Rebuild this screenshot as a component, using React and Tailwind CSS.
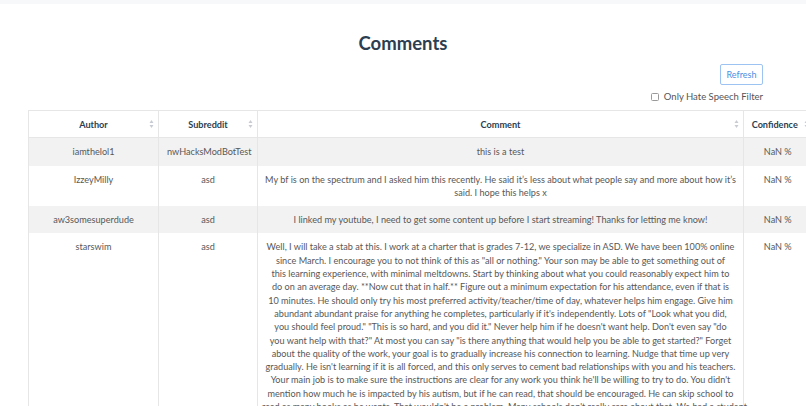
import { useState } from 'react';

// long comment kept as its visible lines so the wrap matches the original table
const starswimLines = [
  'Well, I will take a stab at this. I work at a charter that is grades 7-12, we specialize in ASD. We have been 100% online',
  'since March. I encourage you to not think of this as "all or nothing." Your son may be able to get something out of',
  'this learning experience, with minimal meltdowns. Start by thinking about what you could reasonably expect him to',
  'do on an average day. **Now cut that in half.** Figure out a minimum expectation for his attendance, even if that is',
  '10 minutes. He should only try his most preferred activity/teacher/time of day, whatever helps him engage. Give him',
  'abundant abundant praise for anything he completes, particularly if it\'s independently. Lots of "Look what you did,',
  'you should feel proud." "This is so hard, and you did it." Never help him if he doesn\'t want help. Don\'t even say "do',
  'you want help with that?" At most you can say "is there anything that would help you be able to get started?" Forget',
  'about the quality of the work, your goal is to gradually increase his connection to learning. Nudge that time up very',
  'gradually. He isn\'t learning if it is all forced, and this only serves to cement bad relationships with you and his teachers.',
  'Your main job is to make sure the instructions are clear for any work you think he\'ll be willing to try to do. You didn\'t',
  'mention how much he is impacted by his autism, but if he can read, that should be encouraged. He can skip school to',
  'read as many books as he wants. That wouldn\'t be a problem. Many schools don\'t really care about that. We had a student',
];

const comments = [
  { author: 'iamthelol1', subreddit: 'nwHacksModBotTest', body: 'this is a test', confidence: 'NaN %' },
  {
    author: 'IzzeyMilly',
    subreddit: 'asd',
    body: "My bf is on the spectrum and I asked him this recently. He said it’s less about what people say and more about how it’s said. I hope this helps x",
    confidence: 'NaN %',
  },
  {
    author: 'aw3somesuperdude',
    subreddit: 'asd',
    body: 'I linked my youtube, I need to get some content up before I start streaming! Thanks for letting me know!',
    confidence: 'NaN %',
  },
  { author: 'starswim', subreddit: 'asd', body: starswimLines, confidence: 'NaN %' },
];

function SortIcon() {
  return (
    <svg width="5" height="9" viewBox="0 0 5 9" className="shrink-0">
      <path d="M2.5 0.5 L4.5 3.5 L0.5 3.5 Z" fill="#c8ccd2" />
      <path d="M2.5 8.5 L4.5 5.5 L0.5 5.5 Z" fill="#c8ccd2" />
    </svg>
  );
}

function HeaderCell({ label, last }) {
  return (
    <th
      className={`relative h-[27px] font-bold text-[#2c3e50] ${
        last ? 'pl-1 pr-[10px]' : 'border-r border-[#e6e6e6] px-1'
      }`}
    >
      <span>{label}</span>
      <span className={`absolute top-1/2 -translate-y-1/2 ${last ? 'right-[3px]' : 'right-[4px]'}`}>
        <SortIcon />
      </span>
    </th>
  );
}

function CommentBody({ body }) {
  if (!Array.isArray(body)) return body;
  return body.map((line) => (
    <span key={line} className="block whitespace-nowrap">
      {line}
    </span>
  ));
}

export default function App() {
  const [hateOnly, setHateOnly] = useState(false);

  return (
    <div className="h-[406px] w-[806px] overflow-hidden bg-white font-['Lato','Liberation_Sans',sans-serif]">
      <div className="h-[4px] bg-[#f7f8fa]" />

      <h1 className="mt-[27px] text-center text-[18.5px] font-bold leading-[24px] text-[#2c3e50]">Comments</h1>

      <div className="mt-[9px] flex justify-end pr-[43px]">
        <button
          type="button"
          className="h-[21px] w-[43px] rounded-[2px] border border-[#9cc3f2] text-[9px] text-[#4a90e2]"
        >
          Refresh
        </button>
      </div>

      <label className="mt-[5px] flex items-center justify-end gap-[5px] pr-[43px] text-[9.5px] text-[#555]">
        <input
          type="checkbox"
          checked={hateOnly}
          onChange={(e) => setHateOnly(e.target.checked)}
          className="h-[8px] w-[8px] appearance-none rounded-[1.5px] border border-[#9a9a9a] bg-white"
        />
        <span>Only Hate Speech Filter</span>
      </label>

      <div className="mt-[6px] pl-[28px]">
        <table className="w-[783px] table-fixed border-collapse border-t border-l border-[#e6e6e6] text-center text-[9.15px] leading-[13.3px]">
          <colgroup>
            <col className="w-[130px]" />
            <col className="w-[99px]" />
            <col className="w-[486px]" />
            <col className="w-[68px]" />
          </colgroup>
          <thead>
            <tr className="border-b border-[#e6e6e6] bg-white">
              <HeaderCell label="Author" />
              <HeaderCell label="Subreddit" />
              <HeaderCell label="Comment" />
              <HeaderCell label="Confidence" last />
            </tr>
          </thead>
          <tbody className="text-[#585858]">
            {comments.map((c, i) => (
              <tr key={c.author} className={i % 2 === 0 ? 'bg-[#f2f2f2]' : 'bg-white'}>
                <td className="border-r border-[#e6e6e6] px-2 py-[7px] align-top">{c.author}</td>
                <td className="border-r border-[#e6e6e6] px-2 py-[7px] align-top">{c.subreddit}</td>
                <td className="border-r border-[#e6e6e6] px-[4px] py-[7px] align-top">
                  <CommentBody body={c.body} />
                </td>
                <td className="px-1 py-[7px] align-top">{c.confidence}</td>
              </tr>
            ))}
          </tbody>
        </table>
      </div>
    </div>
  );
}
